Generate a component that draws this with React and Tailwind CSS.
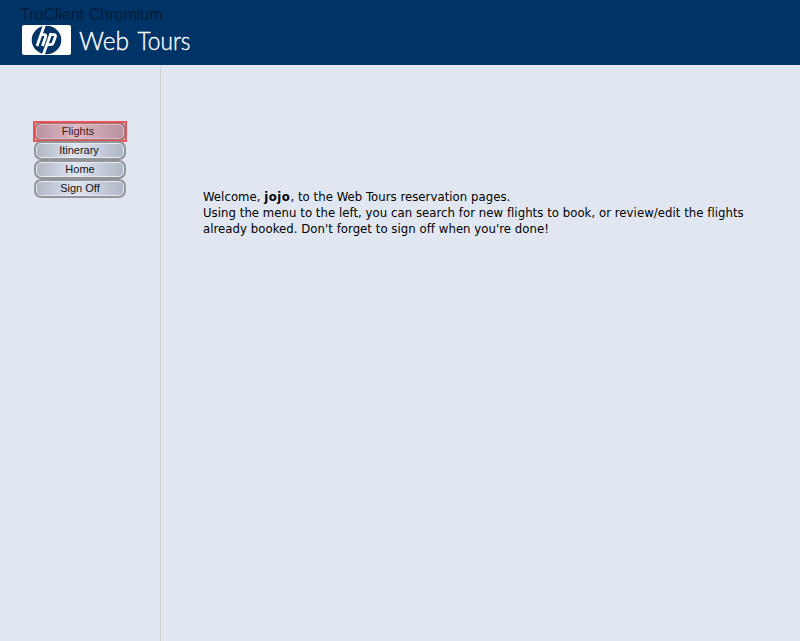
const menuItems = [
  { label: "Flights", offset: "-left-[2px]", active: true },
  { label: "Itinerary", offset: "-left-[1px]" },
  { label: "Home", offset: "left-0" },
  { label: "Sign Off", offset: "left-0" },
];

function HpLogo() {
  return (
    <svg className="block" width="49" height="30" viewBox="0 0 49 30" role="img" aria-label="hp">
      <rect width="49" height="30" rx="2" fill="#fff" />
      <ellipse cx="24.5" cy="15" rx="14.8" ry="14.3" fill="#003366" />
      <g fill="none" stroke="#fff" strokeWidth="2.8" strokeLinejoin="round">
        <path d="M22.8 -1 L15 21" />
        <path d="M18.9 9.7 H22.3 Q24.4 9.7 23.6 12 L20.4 21" />
        <path d="M29 8.3 L20.8 31" />
        <path d="M28.4 9.7 H32 Q34 9.7 33.3 12 L31.1 18 Q30.5 19.7 28.8 19.7 H25" />
      </g>
    </svg>
  );
}

function Header() {
  return (
    <header className="relative h-[65px] bg-[#003366] pt-[25px] pl-[22px]">
      <div className="absolute top-[6px] left-5 text-[16px] leading-[18px] whitespace-nowrap text-[#001c3b]">
        TruClient Chromium
      </div>
      <div className="flex">
        <HpLogo />
        <svg className="ml-2 block" width="116" height="32" viewBox="0 0 116 32">
          <g fill="#fff" stroke="#fff" strokeWidth="0.35" className="font-['Lato',sans-serif] text-[25px] font-light">
            <text x="0" y="25" textLength="50" lengthAdjust="spacingAndGlyphs">Web</text>
            <text x="58.5" y="25" textLength="53" lengthAdjust="spacingAndGlyphs">Tours</text>
          </g>
        </svg>
      </div>
    </header>
  );
}

function MenuButton({ label, offset, active }) {
  return (
    <button className="relative block h-[19px] w-[92px] rounded-[7px] border-2 border-[#929599] bg-linear-to-r from-[#aeb5c4] via-[#e0e6f1] via-45% to-[#aeb5c4] text-center text-[11px] leading-[15px] text-[#111] shadow-[inset_0_0_0_1px_#e6eaf2]">
      <span className={`relative ${offset}`}>{label}</span>
      {active && (
        <span className="absolute -top-[3px] -left-[3px] h-[21px] w-[94px] border-2 border-[#ee4a4e]/90 bg-[#d82c34]/25" />
      )}
    </button>
  );
}

export default function App() {
  return (
    <div className="flex h-[641px] w-full flex-col overflow-hidden bg-[#e0e7f1] font-['Liberation_Sans',sans-serif]">
      <Header />
      <div className="flex flex-1">
        <nav className="mt-px w-[161px] border-r border-[#cfcfcf] pt-[56px] pl-[34px]">
          {menuItems.map((item) => (
            <MenuButton key={item.label} {...item} />
          ))}
        </nav>
        <main className="pt-[124px] pl-[42px] font-['DejaVu_Sans_Condensed','DejaVu_Sans',sans-serif] text-[13px] leading-4 tracking-[0.05px] whitespace-nowrap text-black">
          <p>
            Welcome, <b className="tracking-[0.5px]">jojo</b>, to the Web Tours reservation pages.
          </p>
          <p>
            Using the menu to the left, you can search for new flights to book, or review/edit the flights
          </p>
          <p>already booked. Don't forget to sign off when you're done!</p>
        </main>
      </div>
    </div>
  );
}
